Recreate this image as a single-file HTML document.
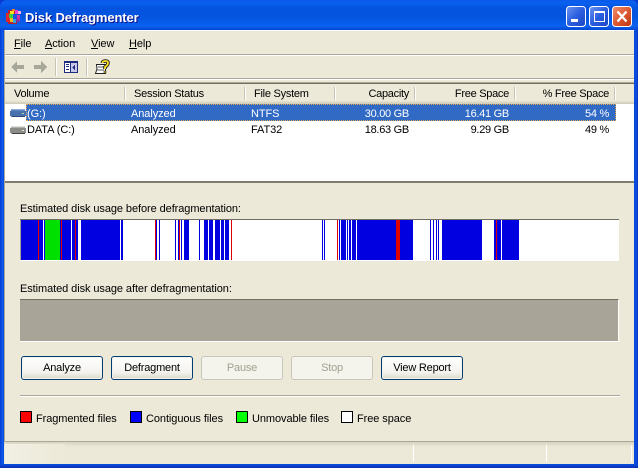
<!DOCTYPE html>
<html><head><meta charset="utf-8"><style>
html,body{margin:0;padding:0;background:#0a3ad0}
body{width:638px;height:468px;overflow:hidden;position:relative;font:11px/13px "Liberation Sans",sans-serif;color:#000;letter-spacing:-.08px}
.a{position:absolute}
.t{position:absolute;white-space:nowrap}
.r{position:absolute;white-space:nowrap;text-align:right;letter-spacing:-.28px}
.h{letter-spacing:-.25px}
u{text-decoration:underline}
.btn{position:absolute;top:356px;width:80px;height:22px;border:1px solid #003c74;border-radius:3px;background:linear-gradient(#fff,#f4f3ee 70%,#dcd8c8);text-align:center;line-height:23px;box-shadow:inset 0 0 0 1px #f2f1ea;letter-spacing:-.2px}
.btn.d{border-color:#c9c7ba;background:#f4f3ec;color:#a1a192;box-shadow:none}
.sq{position:absolute;top:411px;width:10px;height:10px;border:1px solid #000}
.sep{position:absolute;top:87px;width:1px;height:13px;background:#c7c5b2;border-right:1px solid #fff}
</style></head><body>
<div class="a" style="left:0;top:0;width:638px;height:30px;border-radius:7px 7px 0 0;background:linear-gradient(#0a5ae8 0,#0a60f0 3px,#0453de 8px,#0455e0 18px,#0a62f0 26px,#0446d0 30px)"></div>
<div class="a" style="left:0;top:30px;width:4px;height:438px;background:linear-gradient(90deg,#0a3ad0,#0a5cf0 60%,#0846d8)"></div>
<div class="a" style="left:634px;top:30px;width:4px;height:438px;background:linear-gradient(90deg,#0846d8,#0a50e0 60%,#0a2fb8)"></div>
<div class="a" style="left:0;top:464px;width:638px;height:4px;background:linear-gradient(#0a50e0,#0a30b0)"></div>

<svg class="a" style="left:5px;top:8px" width="17" height="18" viewBox="0 0 17 18" shape-rendering="crispEdges">
<rect x="3" y="2" width="9" height="14" fill="#b02030"/><rect x="1" y="5" width="4" height="9" fill="#e02828"/><rect x="12" y="7" width="3" height="6" fill="#d030a0"/>
<rect x="5" y="3" width="4" height="3" fill="#f8e020"/><rect x="7" y="1" width="3" height="2" fill="#f08020"/><rect x="10" y="2" width="3" height="4" fill="#f040d0"/><rect x="4" y="6" width="4" height="4" fill="#30d040"/>
<rect x="8" y="6" width="4" height="5" fill="#2050e0"/><rect x="5" y="10" width="3" height="4" fill="#e8c020"/><rect x="8" y="11" width="3" height="4" fill="#30a0e0"/><rect x="13" y="3" width="3" height="3" fill="#f8b0d8"/><rect x="11" y="11" width="3" height="3" fill="#8030a0"/>
</svg>
<div class="t" style="left:25px;top:10px;font:bold 13px/15px 'Liberation Sans',sans-serif;letter-spacing:-.12px;color:#fff;text-shadow:1px 1px 0 #0f1089">Disk Defragmenter</div>

<svg class="a" style="left:565px;top:6px" width="69" height="22" viewBox="0 0 69 22">
<defs>
<linearGradient id="b" x1="0" y1="0" x2="1" y2="1"><stop offset="0" stop-color="#6f95ee"/><stop offset=".5" stop-color="#2a5ee0"/><stop offset="1" stop-color="#1c44c4"/></linearGradient>
<linearGradient id="c" x1="0" y1="0" x2="1" y2="1"><stop offset="0" stop-color="#ee9070"/><stop offset=".5" stop-color="#dc5a32"/><stop offset="1" stop-color="#c03410"/></linearGradient>
</defs>
<rect x="1.5" y=".5" width="19" height="20" rx="3" fill="url(#b)" stroke="#fff"/>
<rect x="24.500" y=".5" width="19" height="20" rx="3" fill="url(#b)" stroke="#fff"/>
<rect x="47.500" y=".5" width="19" height="20" rx="3" fill="url(#c)" stroke="#fff"/>
<rect x="6" y="13" width="7" height="3" fill="#fff"/>
<rect x="29.500" y="5.500" width="10" height="10" fill="none" stroke="#fff"/><rect x="29" y="5" width="11" height="2" fill="#fff"/>
<path d="M52.500 5.500L61.500 15.500M61.500 5.500L52.500 15.500" stroke="#fff" stroke-width="2.200" fill="none"/>
</svg>

<div class="a" style="left:4px;top:30px;width:630px;height:434px;background:#ece9d8"></div>
<div class="a" style="left:4px;top:30px;width:1px;height:412px;background:#aca899"></div>
<div class="a" style="left:5px;top:30px;width:629px;height:1px;background:#fff"></div>
<div class="a" style="left:5px;top:54px;width:629px;height:1px;background:#aca899"></div>
<div class="a" style="left:5px;top:55px;width:629px;height:1px;background:#fff"></div>
<div class="a" style="left:5px;top:78px;width:629px;height:1px;background:#aca899"></div>
<div class="a" style="left:5px;top:79px;width:629px;height:1px;background:#fff"></div>

<div class="t" style="left:14px;top:38px"><u>F</u>ile</div>
<div class="t" style="left:45px;top:38px"><u>A</u>ction</div>
<div class="t" style="left:91px;top:38px"><u>V</u>iew</div>
<div class="t" style="left:129px;top:38px"><u>H</u>elp</div>

<svg class="a" style="left:5px;top:56px" width="115" height="22" viewBox="0 0 115 22">
<g shape-rendering="crispEdges">
<path d="M6 11L12 5V9H19V13H12V17Z" fill="#a8a89a"/>
<path d="M42 11L36 5V9H29V13H36V17Z" fill="#a8a89a"/>
<rect x="50" y="2" width="1" height="18" fill="#c7c5b2"/><rect x="51" y="2" width="1" height="18" fill="#fff"/>
<rect x="59" y="5" width="14" height="12" fill="#1c2a80"/><rect x="60" y="7" width="5" height="9" fill="#fff"/><rect x="66" y="7" width="6" height="9" fill="#c8c8e8"/>
<rect x="61" y="8" width="3" height="1" fill="#1c2a80"/><rect x="61" y="10" width="3" height="1" fill="#1c2a80"/><rect x="61" y="13" width="3" height="1" fill="#1c2a80"/>
<path d="M67 11.500L70 8.500V14.500Z" fill="#1c2a80"/>
<rect x="81" y="2" width="1" height="18" fill="#c7c5b2"/><rect x="82" y="2" width="1" height="18" fill="#fff"/>
</g>
<path d="M91.500 8.500H100.500V17.500H90.500L92 13Z" fill="#fff" stroke="#222"/>
<path d="M93 11H99M92.500 14H99" stroke="#555"/>
<path d="M97.500 7Q97.500 5 100.500 5Q103 5 103 7Q103 9 100 11V13" fill="none" stroke="#222" stroke-width="3.600"/>
<path d="M97.500 7Q97.500 5 100.500 5Q103 5 103 7Q103 9 100 11V13" fill="none" stroke="#f8e020" stroke-width="1.800"/>
<rect x="99" y="15" width="2" height="2" fill="#f8e020" stroke="#222" stroke-width=".6"/>
</svg>

<div class="a" style="left:5px;top:82px;width:629px;height:100px;background:#fff"></div>
<div class="a" style="left:5px;top:82px;width:629px;height:1px;background:#aca899"></div>
<div class="a" style="left:5px;top:83px;width:629px;height:1px;background:#716f64"></div>
<div class="a" style="left:5px;top:84px;width:629px;height:20px;background:linear-gradient(#ece9d8 0,#ece9d8 85%,#dcd9c6 90%,#cfccb9)"></div>
<div class="sep" style="left:124px"></div><div class="sep" style="left:244px"></div><div class="sep" style="left:334px"></div><div class="sep" style="left:414px"></div><div class="sep" style="left:514px"></div><div class="sep" style="left:614px"></div>
<div class="t h" style="left:14px;top:88px">Volume</div>
<div class="t h" style="left:134px;top:88px">Session Status</div>
<div class="t h" style="left:254px;top:88px">File System</div>
<div class="r" style="right:229px;top:88px">Capacity</div>
<div class="r" style="right:129px;top:88px">Free Space</div>
<div class="r" style="right:29px;top:88px">% Free Space</div>

<div class="a" style="left:26px;top:104px;width:588px;height:15px;background:#316ac5;border:1px dotted #e8a848"></div>
<svg class="a" style="left:10px;top:108px" width="16" height="29" viewBox="0 0 16 29" shape-rendering="crispEdges">
<rect x="1" y="1" width="14" height="8" rx="1" fill="#5d86c4"/><rect x="0" y="3" width="16" height="5" fill="#4a70ae"/><rect x="2" y="8" width="13" height="1" fill="#2e4a7a"/><rect x="12" y="5" width="2" height="1" fill="#b8e0a0"/><rect x="1" y="1" width="14" height="1" fill="#8aa8d8"/>
<rect x="1" y="18" width="14" height="8" rx="1" fill="#b0b0ac"/><rect x="0" y="20" width="16" height="5" fill="#8c8c88"/><rect x="2" y="25" width="13" height="1" fill="#444"/><rect x="12" y="22" width="2" height="1" fill="#d8f0c0"/><rect x="1" y="18" width="14" height="1" fill="#e0e0dc"/>
</svg>
<div class="t" style="left:27px;top:108px;color:#fff">(G:)</div>
<div class="t" style="left:131px;top:108px;color:#fff">Analyzed</div>
<div class="t" style="left:251px;top:108px;color:#fff">NTFS</div>
<div class="r" style="right:229px;top:108px;color:#fff">30.00 GB</div>
<div class="r" style="right:129px;top:108px;color:#fff">16.41 GB</div>
<div class="r" style="right:29px;top:108px;color:#fff">54 %</div>
<div class="t" style="left:27px;top:124px">DATA (C:)</div>
<div class="t" style="left:131px;top:124px">Analyzed</div>
<div class="t" style="left:251px;top:124px">FAT32</div>
<div class="r" style="right:229px;top:124px">18.63 GB</div>
<div class="r" style="right:129px;top:124px">9.29 GB</div>
<div class="r" style="right:29px;top:124px">49 %</div>
<div class="a" style="left:5px;top:181px;width:629px;height:2px;background:#7f7d6e"></div>

<div class="t" style="left:20px;top:203px">Estimated disk usage before defragmentation:</div>
<svg class="a" style="left:20px;top:219px" width="600" height="43" viewBox="20 219 600 43" shape-rendering="crispEdges">
<rect x="20" y="219" width="599" height="42" fill="#fff"/>
<g fill="#0000e0">
<rect x="21" y="220" width="17" height="40"/><rect x="39" y="220" width="4" height="40"/><rect x="44" y="220" width="1" height="40"/><rect x="60" y="220" width="1" height="40"/><rect x="62" y="220" width="9" height="40"/><rect x="72" y="220" width="3" height="40"/><rect x="76" y="220" width="2" height="40"/><rect x="81" y="220" width="39" height="40"/><rect x="121" y="220" width="2" height="40"/><rect x="156" y="220" width="1" height="40"/><rect x="159" y="220" width="1" height="40"/><rect x="175" y="220" width="1" height="40"/><rect x="178" y="220" width="1" height="40"/><rect x="181" y="220" width="1" height="40"/><rect x="184" y="220" width="5" height="40"/><rect x="199" y="220" width="1" height="40"/><rect x="204" y="220" width="4" height="40"/><rect x="209" y="220" width="4" height="40"/><rect x="215" y="220" width="5" height="40"/><rect x="221" y="220" width="3" height="40"/><rect x="225" y="220" width="4" height="40"/>
<rect x="322" y="220" width="1" height="40"/><rect x="324" y="220" width="1" height="40"/><rect x="339" y="220" width="1" height="40"/><rect x="341" y="220" width="5" height="40"/><rect x="347" y="220" width="1" height="40"/><rect x="349" y="220" width="2" height="40"/><rect x="352" y="220" width="4" height="40"/><rect x="357" y="220" width="39" height="40"/><rect x="400" y="220" width="13" height="40"/>
<rect x="430" y="220" width="1" height="40"/><rect x="433" y="220" width="1" height="40"/><rect x="436" y="220" width="1" height="40"/><rect x="438" y="220" width="1" height="40"/><rect x="442" y="220" width="40" height="40"/><rect x="494" y="220" width="2" height="40"/><rect x="497" y="220" width="4" height="40"/><rect x="502" y="220" width="17" height="40"/>
</g>
<g fill="#e00000">
<rect x="38" y="220" width="1" height="40"/><rect x="61" y="220" width="1" height="40"/><rect x="75" y="220" width="1" height="40"/><rect x="155" y="220" width="1" height="40"/><rect x="179" y="220" width="1" height="40"/><rect x="231" y="220" width="1" height="40"/><rect x="337" y="220" width="1" height="40"/><rect x="396" y="220" width="4" height="40"/><rect x="496" y="220" width="1" height="40"/>
</g>
<rect x="45" y="220" width="15" height="40" fill="#00e000"/>
<rect x="20" y="219" width="599" height="1" fill="#716f64"/><rect x="20" y="220" width="1" height="40" fill="#a8a598"/>
</svg>

<div class="t" style="left:20px;top:283px">Estimated disk usage after defragmentation:</div>
<div class="a" style="left:20px;top:299px;width:598px;height:41px;background:#a8a598;border-top:1px solid #716f64;border-right:1px solid #fff;border-bottom:1px solid #fff"></div>

<div class="btn" style="left:21px">Analyze</div>
<div class="btn" style="left:111px">Defragment</div>
<div class="btn d" style="left:201px">Pause</div>
<div class="btn d" style="left:291px">Stop</div>
<div class="btn" style="left:381px">View Report</div>

<div class="a" style="left:20px;top:395px;width:600px;height:1px;background:#aca899"></div>
<div class="a" style="left:20px;top:396px;width:600px;height:1px;background:#fff"></div>

<div class="sq" style="left:20px;background:#f00"></div><div class="t" style="left:36px;top:413px">Fragmented files</div>
<div class="sq" style="left:130px;background:#00f"></div><div class="t" style="left:146px;top:413px">Contiguous files</div>
<div class="sq" style="left:236px;background:#0f0"></div><div class="t" style="left:252px;top:413px">Unmovable files</div>
<div class="sq" style="left:341px;background:#fff"></div><div class="t" style="left:357px;top:413px">Free space</div>

<div class="a" style="left:5px;top:441px;width:629px;height:1px;background:#aca899"></div>
<div class="a" style="left:4px;top:442px;width:630px;height:22px;background:linear-gradient(#d8d4c2,#ece9d8 5px)"></div>
<div class="a" style="left:5px;top:444px;width:60px;height:20px;background:linear-gradient(90deg,#f2f0e4,#ece9d8)"></div>
<div class="a" style="left:413px;top:445px;width:1px;height:17px;background:#fff"></div>
<div class="a" style="left:546px;top:445px;width:1px;height:17px;background:#fff"></div>
<div class="a" style="left:631px;top:445px;width:1px;height:17px;background:#fff"></div>
</body></html>
